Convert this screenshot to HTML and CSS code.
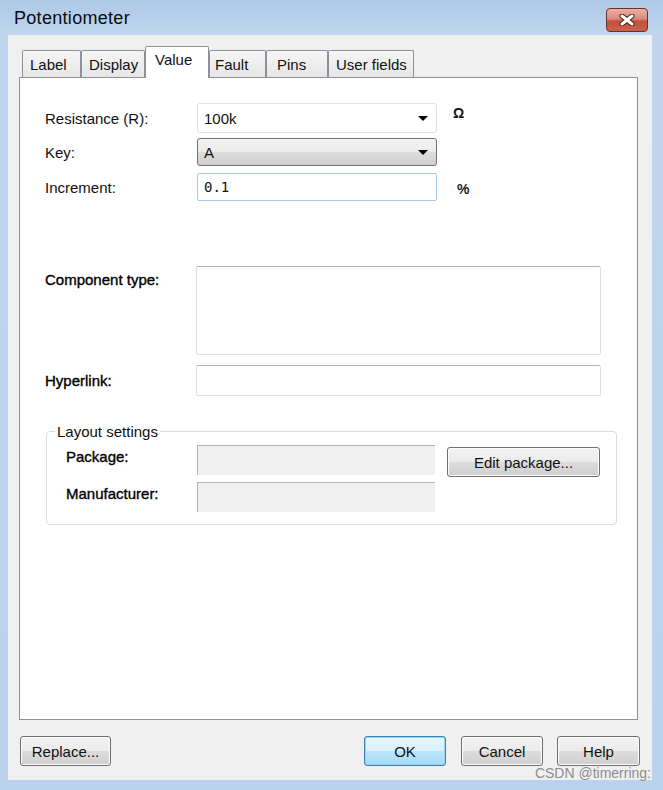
FILE: index.html
```html
<!DOCTYPE html>
<html>
	<head>
		<meta charset="utf-8">
		<title>Potentiometer</title>
		<link rel="stylesheet" href="styles.css">
	</head>
	<body>
		<div class="window">
			<header class="titlebar">
				<span class="title">Potentiometer</span>
				<button class="close" title="Close">
					<svg width="16" height="12" viewBox="0 0 16 12">
						<path d="M3 2 L13 10 M13 2 L3 10" stroke="#4d1d16" stroke-width="5" stroke-linecap="round"/>
						<path d="M3 2 L13 10 M13 2 L3 10" stroke="#fff" stroke-width="3" stroke-linecap="round"/>
					</svg>
				</button>
			</header>
			<div class="client">
				<nav class="tabs">
					<a class="tab tab-label">Label</a>
					<a class="tab tab-display">Display</a>
					<a class="tab tab-value active">Value</a>
					<a class="tab tab-fault">Fault</a>
					<a class="tab tab-pins">Pins</a>
					<a class="tab tab-user">User fields</a>
				</nav>
				<section class="panel">
					<div class="row">
						<label class="lbl">Resistance (R):</label>
						<div class="combo combo-edit">100k<span class="arrow"></span></div>
						<span class="unit unit-ohm">Ω</span>
					</div>
					<div class="row row-key">
						<label class="lbl">Key:</label>
						<div class="combo combo-list">A<span class="arrow"></span></div>
					</div>
					<div class="row row-inc">
						<label class="lbl">Increment:</label>
						<div class="edit edit-focus mono">0.1</div>
						<span class="unit unit-pct">%</span>
					</div>
					<div class="row row-type">
						<label class="lbl lbl-dark">Component type:</label>
						<div class="memo"></div>
					</div>
					<div class="row row-link">
						<label class="lbl lbl-dark">Hyperlink:</label>
						<div class="memo memo-line"></div>
					</div>
					<fieldset class="group">
						<legend>Layout settings</legend>
						<div class="group-grid">
							<label class="lbl-dark">Package:</label>
							<div class="readonly"></div>
							<button class="btn btn-edit">Edit package...</button>
							<label class="lbl-dark">Manufacturer:</label>
							<div class="readonly"></div>
						</div>
					</fieldset>
				</section>
				<footer class="actions">
					<button class="btn btn-replace">Replace...</button>
					<span class="spacer"></span>
					<button class="btn btn-ok">OK</button>
					<button class="btn btn-cancel">Cancel</button>
					<button class="btn btn-help">Help</button>
				</footer>
				<span class="mark">CSDN @timerring:</span>
			</div>
		</div>
	</body>
</html>
```

FILE: styles.css
```css
body {
	margin: 0;
	font-family: "Liberation Sans", Arial, sans-serif;
	font-size: 15px;
	color: #111;
	background: #bcd4ee;
}
.window {
	width: 663px;
	height: 790px;
	display: flex;
	flex-direction: column;
	background: linear-gradient(#adc8e7, #c0d6ee 36px, #bad2ec);
}
.titlebar {
	height: 35px;
	display: flex;
	align-items: center;
	justify-content: space-between;
	padding: 0 15px 0 14px;
	box-sizing: border-box;
}
.title {
	font-size: 18px;
	letter-spacing: 0.3px;
	color: #0b0b0b;
	margin-top: 2px;
}
.close {
	width: 42px;
	height: 24px;
	padding: 0;
	margin-top: 4px;
	border: 1px solid #6a3128;
	border-radius: 4px;
	background: linear-gradient(#eab1a5, #d98a7b 45%, #c4503c 55%, #c8644c);
	display: flex;
	align-items: center;
	justify-content: center;
}
.client {
	position: relative;
	flex: 1;
	margin: 0 11px 10px 8px;
	padding: 11px 14px 0 11px;
	background: #f0f0f0;
	display: flex;
	flex-direction: column;
}

/* tab strip */
.tabs {
	display: flex;
	align-items: flex-end;
	height: 31px;
	padding-left: 3px;
}
.tab {
	box-sizing: border-box;
	height: 27px;
	padding: 5px 0 0 7px;
	border: 1px solid #8e9199;
	border-bottom: none;
	border-radius: 2px 2px 0 0;
	background: linear-gradient(#f6f6f6, #e6e6e6);
	color: #111;
}
.tab.active {
	position: relative;
	z-index: 1;
	height: 32px;
	margin-bottom: -1px;
	padding-top: 4px;
	padding-left: 9px;
	background: #fff;
}
.tab-label { width: 59px; }
.tab-display { width: 64px; }
.tab-value { width: 64px; }
.tab-fault { width: 57px; padding-left: 5px; }
.tab-pins { width: 62px; padding-left: 10px; }
.tab-user { width: 86px; }

.panel {
	box-sizing: border-box;
	height: 643px;
	padding: 25px 0 0 25px;
	background: #fff;
	border: 1px solid #8e9199;
}

/* form rows */
.row {
	display: flex;
	align-items: center;
}
.lbl {
	width: 152px;
	flex: none;
}
.lbl-dark {
	color: #000;
	-webkit-text-stroke: 0.35px #000;
}
.combo, .edit {
	box-sizing: border-box;
	position: relative;
	width: 240px;
	height: 28px;
	padding: 0 6px;
	display: flex;
	align-items: center;
	border-radius: 3px;
}
.combo-edit {
	height: 30px;
	border: 1px solid #dde2e8;
	background: #fff;
}
.combo-list {
	border: 1px solid #707070;
	background: linear-gradient(#f3f3f3, #ebebeb 50%, #dddddd 50%, #d0d0d0);
}
.arrow {
	position: absolute;
	right: 8px;
	top: 50%;
	margin-top: -2px;
	border-left: 5px solid transparent;
	border-right: 5px solid transparent;
	border-top: 5px solid #000;
}
.edit-focus {
	border: 1px solid #a8c8e8;
	border-radius: 2px;
	background: #fff;
}
.mono {
	font-family: "DejaVu Sans Mono", "Liberation Mono", monospace;
	font-size: 14px;
}
.unit {
	font-weight: bold;
	color: #1a1a1a;
}
.unit-ohm {
	align-self: flex-start;
	margin: 2px 0 0 16px;
	font-size: 14px;
}
.unit-pct {
	margin: 4px 0 0 20px;
	font-size: 14px;
}
.row-key { margin-top: 5px; }
.row-inc { margin-top: 7px; }
.row-type {
	margin-top: 65px;
	align-items: flex-start;
}
.row-type .lbl { margin-top: 5px; }
.row-link { margin-top: 10px; }
.lbl-dark.lbl { width: 151px; }
.memo {
	box-sizing: border-box;
	width: 405px;
	height: 89px;
	border: 1px solid #dde2e8;
	border-top-color: #aeb1b8;
	border-radius: 2px;
	background: #fff;
}
.memo-line { height: 31px; }

/* layout settings box */
.group {
	box-sizing: border-box;
	width: 571px;
	height: 102px;
	margin: 27px 0 0 1px;
	padding: 5px 0 0 19px;
	border: 1px solid #d5dfe5;
	border-radius: 4px;
}
.group legend {
	padding: 0 2px;
	margin-left: -11px;
	color: #111;
}
.group-grid {
	display: grid;
	grid-template-columns: 119px 238px 153px;
	grid-template-rows: 30px 30px;
	column-gap: 12px;
	row-gap: 7px;
	align-items: center;
}
.group-grid label {
	align-self: start;
	margin-top: 3px;
}
.readonly {
	box-sizing: border-box;
	height: 30px;
	background: #f0f0f0;
	border-top: 1px solid #b4b4b4;
	border-left: 1px solid #b4b4b4;
}

/* push buttons */
.btn {
	box-sizing: border-box;
	height: 30px;
	padding: 0;
	font-family: inherit;
	font-size: 15px;
	color: #111;
	border: 1px solid #707070;
	border-radius: 3px;
	background: linear-gradient(#f3f3f3, #ebebeb 50%, #dddddd 50%, #cfcfcf);
	box-shadow: inset 0 0 0 1px #fcfcfc;
}
.btn-edit {
	width: 153px;
	margin-top: 4px;
}
.actions {
	display: flex;
	margin: 16px -2px 0 1px;
}
.spacer { flex: 1; }
.btn-replace { width: 91px; }
.btn-ok {
	width: 82px;
	border-color: #3c7fb1;
	background: linear-gradient(#eaf6fd, #d9f0fc 50%, #bee6fd 50%, #a7d9f5);
	box-shadow: inset 0 0 0 1px #9ad5f4;
}
.btn-cancel {
	width: 82px;
	margin-left: 15px;
}
.btn-help {
	width: 83px;
	margin-left: 14px;
}
.mark {
	position: absolute;
	right: 1px;
	bottom: -1px;
	font-size: 14px;
	color: #8d8d8d;
}
```
